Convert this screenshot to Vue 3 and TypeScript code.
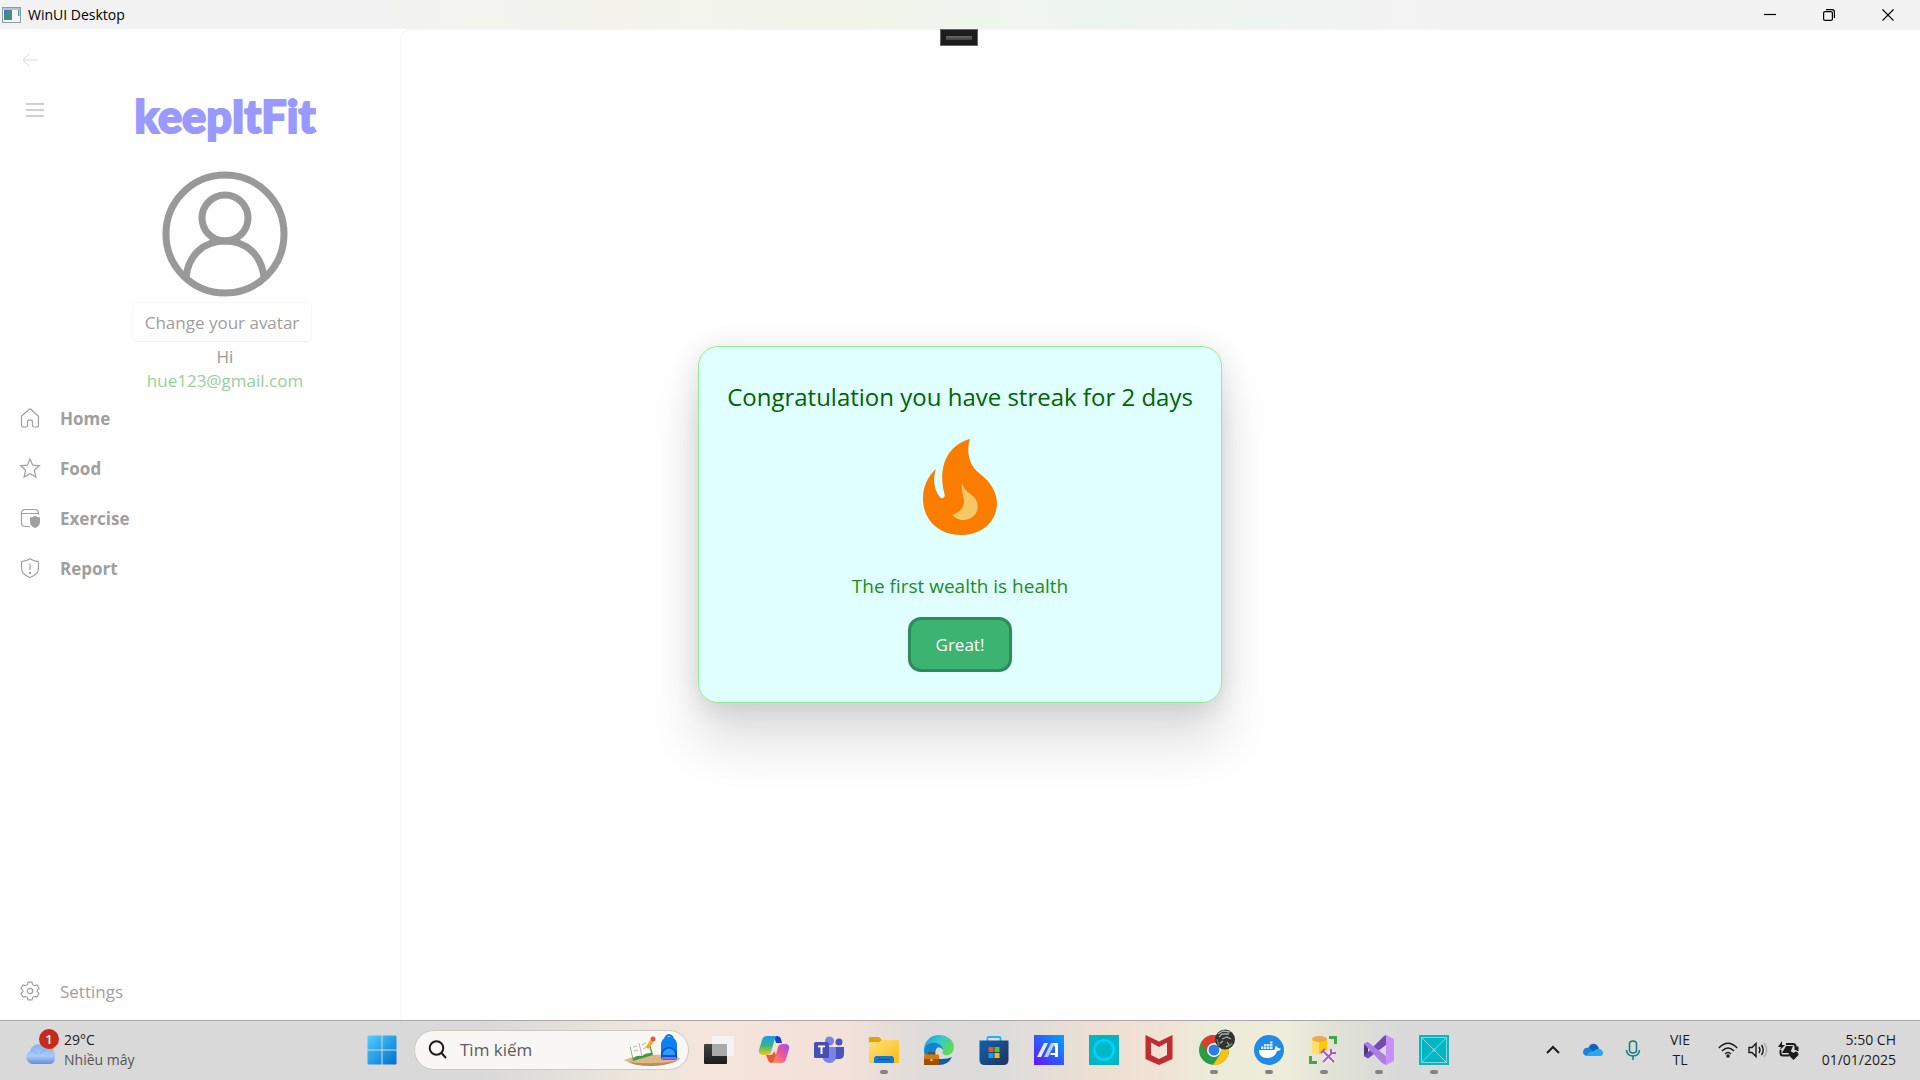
<script setup lang="ts">
interface NavItem {
  label: string
  outline: string
  solid?: string
}

const navItems: NavItem[] = [
  { label: 'Home', outline: 'M1.5 8.2 9.2 1.2Q10 .6 10.8 1.2L18.5 8.2V17Q18.5 19 16.5 19H14Q12.5 19 12.5 17.5V13.5Q12.5 12.2 11.2 12.2H8.8Q7.5 12.2 7.5 13.5V17.5Q7.5 19 6 19H3.500Q1.500 19 1.500 17Z' },
  { label: 'Food', outline: 'M10 1 12.700 7.200 19.400 7.800 14.400 12.300 15.900 19 10 15.700 4.100 19 5.600 12.300 .6 7.800 7.300 7.200Z' },
  { label: 'Exercise', outline: 'M10 18.500H5Q1.500 18.500 1.500 15V5Q1.500 1.500 5 1.500H15Q18.500 1.500 18.500 5V6.500M1.500 5.500H18.500', solid: 'M15 7.500Q17 9.300 20 9.500V14Q20 18 15 20Q10 18 10 14V9.500Q13 9.300 15 7.500Z' },
  { label: 'Report', outline: 'M10 .8Q14 3.500 18.500 3.700V10Q18.500 16.500 10 19.500Q1.500 16.500 1.500 10V3.700Q6 3.500 10 .8ZM10 5.500V12', solid: 'M9 14H11V16H9Z' },
]
</script>

<template>
  <div class="desktop">
    <header class="titlebar">
      <svg class="app-icon" viewBox="0 0 19 16" aria-hidden="true">
        <rect x=".5" y=".5" width="18" height="15" fill="#f4f6f8" stroke="#8e9aa5" />
        <path d="M1 1H18V3H1Z" fill="#b9c3cc" />
        <path d="M2 3H10V13H2Z" fill="#3f9080" />
        <path d="M2 3H7L2 9Z" fill="#3d7fb0" />
        <path d="M16 3H17.500V9H16Z" fill="#4aa39a" />
      </svg>
      <span class="title">WinUI Desktop</span>
      <div class="window-buttons">
        <button type="button" aria-label="Minimize">
          <svg viewBox="0 0 12 12"><path d="M0 5.500H12" /></svg>
        </button>
        <button type="button" aria-label="Restore">
          <svg viewBox="0 0 12 12"><rect x=".6" y="2.600" width="8.800" height="8.800" rx="1.500" /><path d="M3 .6H9Q11.400 .6 11.400 3V9" /></svg>
        </button>
        <button type="button" aria-label="Close">
          <svg viewBox="0 0 12 12"><path d="M.5 .5 11.500 11.500M11.500 .5 .5 11.500" /></svg>
        </button>
      </div>
    </header>

    <main class="workspace">
      <aside class="sidebar">
        <button type="button" class="back" aria-label="Back">
          <svg viewBox="0 0 16 14"><path d="M15.500 7H1M7.500 .5 1 7 7.500 13.500" /></svg>
        </button>
        <div class="profile-row">
          <button type="button" class="menu" aria-label="Menu">
            <svg viewBox="0 0 20 14"><path d="M1 1H19M1 7H19M1 13H19" /></svg>
          </button>
          <div class="profile">
            <span class="brand">keepItFit</span>
            <svg class="avatar" viewBox="0 0 126 126" role="img" aria-label="Avatar">
              <circle cx="63" cy="63" r="59" />
              <circle cx="63" cy="47" r="23" />
              <path d="M24 107C26 84 42 70 63 70S100 84 102 107" />
            </svg>
            <button type="button" class="change">Change your avatar</button>
            <span class="greeting">Hi</span>
            <span class="email">hue123@gmail.com</span>
          </div>
        </div>
        <nav class="nav">
          <a v-for="item in navItems" :key="item.label" href="#" class="nav-item">
            <svg viewBox="0 0 20 20" aria-hidden="true">
              <path :d="item.outline" class="outline" />
              <path v-if="item.solid" :d="item.solid" class="solid" />
            </svg>
            <span>{{ item.label }}</span>
          </a>
        </nav>
        <a href="#" class="nav-item settings">
          <svg viewBox="0 0 20 20" aria-hidden="true">
            <path class="outline" d="M8 1.200H12L12.700 3.700 14.500 4.700 17 4 19 7.500 17.200 9.300V10.700L19 12.500 17 16 14.500 15.300 12.700 16.300 12 18.800H8L7.300 16.300 5.500 15.300 3 16 1 12.500 2.800 10.700V9.300L1 7.500 3 4 5.500 4.700 7.300 3.700Z" />
            <circle class="outline" cx="10" cy="10" r="2.700" />
          </svg>
          <span>Settings</span>
        </a>
      </aside>
      <section class="content"></section>

      <div class="debug-handle"><span></span></div>

      <div class="overlay">
        <section class="dialog" role="dialog" aria-labelledby="dialog-title">
          <h1 id="dialog-title">Congratulation you have streak for 2 days</h1>
          <svg class="flame" viewBox="0 0 74 96" aria-hidden="true">
            <path fill="#fa7d00" d="M47 0C43 13 46 26 56 34C68 43 74 54 74 65C73 84 58 96 38 96C15 96 0 80 0 60C0 47 5 37 13 30C9 42 12 52 17 58C19 61 23 58 21.500 55C15 31 22 7 47 0Z" />
            <path fill="#f7c765" d="M39 43C40 50 45 53 50 57C60 67 53 81 40 81C36 81 32 79 29 76C36 74 41 69 41 62C40 55 38 51 39 43Z" />
          </svg>
          <p>The first wealth is health</p>
          <button type="button" class="confirm">Great!</button>
        </section>
      </div>
    </main>

    <footer class="taskbar">
      <button type="button" class="weather">
        <svg viewBox="0 0 34 36" aria-hidden="true">
          <defs>
            <linearGradient id="cloud" x1="0" y1="0" x2="0" y2="1"><stop offset="0" stop-color="#7fb2f4" /><stop offset=".6" stop-color="#adcaf6" /><stop offset="1" stop-color="#5f8be0" /></linearGradient>
          </defs>
          <circle cx="22" cy="17" r="7" fill="#f97b12" />
          <path fill="url(#cloud)" d="M7 35A7 7 0 0 1 5 22C7 14 18 13 21 20C27 18 31 23 30 29Q30 35 24 35Z" />
          <path fill="none" stroke="#86aff0" d="M5 22Q10 21 12 25M15 25Q17 21 22 20" />
          <circle cx="24" cy="10" r="10" fill="#c42b1c" />
          <text x="24" y="15" text-anchor="middle" fill="#fff" font-size="13" font-weight="600">1</text>
        </svg>
        <span class="stack"><span>29°C</span><span class="muted">Nhiều mây</span></span>
      </button>

      <div class="apps">
        <button type="button" class="app" aria-label="Start">
          <svg viewBox="0 0 30 30">
            <defs><linearGradient id="win" x1="0" y1="0" x2="1" y2="1"><stop offset="0" stop-color="#4fd0fd" /><stop offset="1" stop-color="#006fd0" /></linearGradient></defs>
            <path fill="url(#win)" d="M.5 1.500Q.5.500 1.500.500H14.500V14.500H.5ZM15.500.500H28.500Q29.500.500 29.500 1.500V14.500H15.500ZM.5 15.500H14.500V29.500H1.500Q.5 29.500.5 28.500ZM15.500 15.500H29.500V28.500Q29.500 29.500 28.500 29.500H15.500Z" />
          </svg>
        </button>
        <label class="search">
          <svg class="lens" viewBox="0 0 20 20" aria-hidden="true"><circle cx="8.500" cy="8" r="6.800" /><path d="M13.500 13 18 18" /></svg>
          <input type="text" placeholder="Tìm kiếm" aria-label="Tìm kiếm" />
          <svg class="doodle" viewBox="0 0 58 32" aria-hidden="true">
            <path fill="#dfb58a" d="M1 26Q20 18 54 22L57 25Q50 31 28 31Q8 31 1 26Z" />
            <path fill="#c18a58" d="M5 28Q28 31 54 27Q42 32 28 32Q12 32 5 28Z" />
            <path fill="#3e9b48" d="M7 13 10 27 30 21 27 10Z" />
            <path fill="#f8f8f5" d="M7 10Q12 7 16 9Q20 5 25 6L28 19Q22 19 19 22Q14 21 10 24Z" />
            <path fill="none" stroke="#b5b5b5" d="M16 9 19 22M10 13 14 12M11 17 15 16M19 11 23 9M20 15 24 13" />
            <path stroke="#f6a91f" stroke-width="3.500" d="M24 14 29 7" /><circle cx="30" cy="5" r="2.500" fill="#e4554a" />
            <path fill="none" stroke="#1573d6" stroke-width="2" d="M42 4Q46-2 50 4" />
            <path fill="#0b80f5" d="M38 11C38 0 54 0 54 11V24Q54 26 52 26H40Q38 26 38 24Z" />
            <path fill="#0456be" d="M38 19C40 11 52 11 54 19V24H38Z" /><path fill="#2e9bff" d="M40 19C42 13 50 13 52 19V21H40Z" />
            <path fill="#8d6cf3" d="M39 23H53V25H39Z" />
          </svg>
        </label>
        <button type="button" class="app" aria-label="Task view">
          <svg viewBox="0 0 30 30">
            <defs><linearGradient id="tv" x1="0" y1="0" x2="0" y2="1"><stop offset="0" stop-color="#454545" /><stop offset="1" stop-color="#1c1c1c" /></linearGradient></defs>
            <rect y="9" width="23" height="20" rx="1" fill="url(#tv)" /><rect x="8" y="1" width="22" height="20" rx="1" fill="#f4f4f4" /><path fill="#aaa" d="M8 9H23V21H8Z" />
          </svg>
        </button>
        <button type="button" class="app" aria-label="Copilot">
          <svg viewBox="0 0 30 30">
            <defs>
              <linearGradient id="cpa" x1="0" y1="0" x2="0" y2="1"><stop offset="0" stop-color="#189cf0" /><stop offset=".5" stop-color="#35b58a" /><stop offset="1" stop-color="#f3c80c" /></linearGradient>
              <linearGradient id="cpb" x1="1" y1="0" x2="0" y2="1"><stop offset="0" stop-color="#a64df0" /><stop offset=".5" stop-color="#ed5696" /><stop offset="1" stop-color="#ffa252" /></linearGradient>
            </defs>
            <path fill="#1645bc" d="M15 1H18Q21 1 22 4L23 8H17Z" />
            <path fill="url(#cpa)" d="M8 1H18Q16 2 15 7L12 17Q11 20 7 20H4Q-1 20 0 15L3 5Q4 1 8 1Z" />
            <path fill="url(#cpb)" d="M22 28H13Q15 27 16 23L19 12Q20 9 24 9H26Q31 9 30 14L27 24Q26 28 22 28Z" />
            <path fill="#ee5540" d="M7 20H11Q14 20 15 16L17 20 15 26Q14 28 12 28 10 28 9 25Z" />
          </svg>
        </button>
        <button type="button" class="app" aria-label="Teams">
          <svg viewBox="0 0 30 30">
            <circle cx="25" cy="7" r="3.500" fill="#4b53bc" /><circle cx="15.500" cy="6" r="4.500" fill="#7b83eb" />
            <path fill="#4b53bc" d="M20 12H30V19Q30 24 25 24H20Z" /><path fill="#7b83eb" d="M9 12H22V20Q22 28 15.500 28T8 20Z" />
            <rect y="7" width="15" height="16" rx="1.500" fill="#464eb8" /><path fill="#fff" d="M4 10.500H11V12.300H8.500V19H6.500V12.300H4Z" />
          </svg>
        </button>
        <button type="button" class="app running" aria-label="File Explorer">
          <svg viewBox="0 0 30 30">
            <defs><linearGradient id="folder" x1="0" y1="0" x2="1" y2="1"><stop offset="0" stop-color="#ffe07b" /><stop offset="1" stop-color="#f9bd15" /></linearGradient></defs>
            <path fill="#dda20e" d="M0 3Q0 2 1 2H10L13 5V10H0Z" /><path fill="url(#folder)" d="M0 7H10L13 5H29Q30 5 30 6V27Q30 28 29 28H1Q0 28 0 27Z" />
            <path fill="#1576cd" d="M5 28V24Q5 21 8 21H22Q25 21 25 24V28Z" /><path fill="#084f98" d="M9 24H21V25H9Z" />
          </svg>
        </button>
        <button type="button" class="app" aria-label="Edge">
          <svg viewBox="0 0 30 30">
            <defs><linearGradient id="edge" x1="0" y1="0" x2="1" y2=".5"><stop offset="0" stop-color="#1599e0" /><stop offset=".5" stop-color="#31c7d4" /><stop offset="1" stop-color="#60dc55" /></linearGradient></defs>
            <path fill="#0e5ca8" d="M9 14Q8 25 18 24Q24 24 28 22Q24 30 15 30Q5 29 2 20Z" />
            <path fill="url(#edge)" d="M0 15C0 6 7 0 15 0C24 0 30 6 30 12C30 18 25 21 21 20C17 19 19 17 19 15C19 9 9 7 0 15Z" />
            <path fill="#1183d2" d="M0 17C0 10 6 7 12 8Q19 10 19 15Q15 10 12 14Q10 20 14 27Q2 30 0 17Z" />
            <path fill="none" stroke="#794100" stroke-width="1.500" d="M5 20V18H10V20" /><rect y="19.500" width="15" height="10.500" rx="1" fill="#d6790c" /><path fill="#9e4e05" d="M0 24H15V30H0Z" /><circle cx="7.500" cy="25" r="1.300" fill="#ffca28" />
          </svg>
        </button>
        <button type="button" class="app" aria-label="Store">
          <svg viewBox="0 0 30 30">
            <defs><linearGradient id="store" x1="0" y1="0" x2="1" y2="1"><stop offset="0" stop-color="#0c61b0" /><stop offset="1" stop-color="#22335c" /></linearGradient></defs>
            <path fill="none" stroke="#22b4ef" stroke-width="1.800" d="M8.500 6V3Q8.500 2 9.500 2H20.500Q21.500 2 21.500 3V6" /><path fill="url(#store)" d="M.5 5.500H29.500V25Q29.500 30 24.500 30H5.500Q.5 30 .5 25Z" />
            <path fill="#f25022" d="M9.500 12H14.500V17H9.500Z" /><path fill="#7fba00" d="M15.500 12H20.500V17H15.500Z" /><path fill="#00a4ef" d="M9.500 18H14.500V23H9.500Z" /><path fill="#ffb900" d="M15.500 18H20.500V23H15.500Z" />
          </svg>
        </button>
        <button type="button" class="app" aria-label="MyASUS">
          <svg viewBox="0 0 30 30">
            <defs><linearGradient id="asus" x1="0" y1="1" x2="1" y2="0"><stop offset="0" stop-color="#6a12fb" /><stop offset=".5" stop-color="#2c5cff" /><stop offset="1" stop-color="#00a8ff" /></linearGradient></defs>
            <path fill="url(#asus)" d="M0 0H30V30H0Z" /><path fill="#e4ecff" d="M10 8H14L7 22H3Z" /><path fill="#b9d2ff" d="M17 8H21L14 22H10Z" /><path fill="#fff" d="M19 8H24V22H21V20H16L17 18H21V12Z" />
          </svg>
        </button>
        <button type="button" class="app" aria-label="Alexa">
          <svg viewBox="0 0 30 30"><path fill="#00b7c6" d="M0 0H30V30H0Z" /><circle cx="15" cy="15" r="9.700" fill="none" stroke="#00d2ff" stroke-width="2.500" /><path fill="#00d2ff" d="M12 23 17 26 20 22Z" /></svg>
        </button>
        <button type="button" class="app" aria-label="McAfee">
          <svg viewBox="0 0 30 30"><path fill="#bf2c31" fill-rule="evenodd" d="M1.500 0 15 6.500 28.500 0V24L15 30 1.500 24ZM7 7.500V20L15 24 23 20V7.500L15 12Z" /></svg>
        </button>
        <button type="button" class="app running" aria-label="Chrome">
          <svg viewBox="0 0 30 30">
            <circle cx="15" cy="15" r="15" fill="#2b9b47" /><path fill="#df3b2f" d="M2 7.500A15 15 0 0 1 28 7.500H15Q9 8 7.500 16Z" /><path fill="#fbc116" d="M15 7.500H28A15 15 0 0 1 14 30L22 18Q22 11 15 7.500Z" />
            <circle cx="15" cy="15" r="7" fill="#fff" /><circle cx="15" cy="15" r="5.500" fill="#2e7de9" />
            <circle cx="26" cy="4.500" r="10" fill="#303331" /><path fill="none" stroke="#a9afab" stroke-width="1.300" d="M19-1 24-4 31-3M20 2 23-1 30-1M23 4 28 2 32 4M21 8 24 6M28 7 30 10M27 12 33 9" /><path fill="none" stroke="#3d8a50" stroke-width="1.500" d="M18 4 20 11M33 8 30 12" /><path stroke="#b34444" d="M18 7 23 9" />
          </svg>
        </button>
        <button type="button" class="app running" aria-label="Docker">
          <svg viewBox="0 0 30 30"><circle cx="15" cy="15" r="15" fill="#208ce8" /><path fill="#fff" d="M5 15H20Q22 14 21 11Q23 11 24 13Q26 13 27 14Q26 16 23 16Q21 23 13 23Q5 23 5 15Z" /><path fill="#d6edff" d="M7 11.500H9.500V14H7ZM10 11.500H12.500V14H10ZM13 11.500H15.500V14H13ZM16 11.500H18.500V14H16ZM10 9H12.500V11H10ZM13 9H15.500V11H13ZM16 9H18.500V11H16ZM16 6.500H18.500V8.500H16Z" /></svg>
        </button>
        <button type="button" class="app running" aria-label="Database tools">
          <svg viewBox="0 0 30 30"><path fill="#ffe066" d="M3 4H18V17Q17 19 10.500 19T3 17Z" /><path fill="#ffcb00" d="M10 4H18V16Q16 19 10 19Z" /><ellipse cx="10.500" cy="4" rx="7.500" ry="3" fill="#f0a552" /><path fill="none" stroke="#43a64a" stroke-width="3" d="M20 2.500H26.500V9M1.500 21V27.500H8" /><path fill="none" stroke="#f7edf8" stroke-width="5" d="M14 16 25 27M24 16 14 27" /><path fill="none" stroke="#a75cc5" stroke-width="2" d="M12 18 16 14M14 16 25 27M14 27 23 18M22 14V18H27" /></svg>
        </button>
        <button type="button" class="app running" aria-label="Visual Studio">
          <svg viewBox="0 0 30 30"><path fill="#52328d" d="M0 9 4 7V23L0 21Z" /><path fill="#754bb2" d="M0 21 20 1 22 0V10L4 23.500Z" /><path fill="#ac7ee3" d="M0 9 4 7 22 21V30L18 28Z" /><path fill="#c68ffa" d="M22 0 30 4V26L22 30Z" /></svg>
        </button>
        <button type="button" class="app running" aria-label="WinUI Desktop">
          <svg viewBox="0 0 30 30"><path fill="#00b7c3" d="M0 0H30V30H0Z" /><path fill="none" stroke="#9fc9cb" d="M2.500 2.500H27.500V27.500H2.500ZM2.500 2.500 27.500 27.500M27.500 2.500 2.500 27.500" /><circle cx="15" cy="15" r="1.500" fill="#9fc9cb" /></svg>
        </button>
      </div>

      <div class="tray">
        <button type="button" class="tray-button" aria-label="Show hidden icons">
          <svg viewBox="0 0 20 20"><path class="line thick" d="M4 13 10 7 16 13" /></svg>
        </button>
        <button type="button" class="tray-button" aria-label="OneDrive">
          <svg viewBox="0 0 20 20"><path fill="#0a64bd" d="M5 9Q7 3 12 4Q15 5 16 9L11 13Z" /><path fill="#1485da" d="M4 16Q0 15 0 12Q1 7 6 8L14 14Z" /><path fill="#29a8ef" d="M3 16Q6 11 11 11Q14 8 17 9Q20 10 20 13T17 16Z" /></svg>
        </button>
        <button type="button" class="tray-button" aria-label="Microphone">
          <svg viewBox="0 0 20 20"><path fill="none" stroke="#0f7c80" stroke-width="1.500" d="M6.500 4Q6.500 1 10 1T13.500 4V10Q13.500 13 10 13T6.500 10ZM3.500 10Q4 16 10 16T16.500 10M10 16V20" /></svg>
        </button>
        <button type="button" class="stack language"><span>VIE</span><span>TL</span></button>
        <button type="button" class="status" aria-label="Network, sound and battery">
          <svg viewBox="0 0 20 20"><path class="line" d="M.8 8Q10-1.500 19.200 8M4 11Q10 5 16 11M7 14Q10 11 13 14" /><circle cx="10" cy="16" r="1.700" fill="#1b1b1b" /></svg>
          <svg viewBox="0 0 20 20"><path class="line" d="M1 7.500H4L8 3.500V16.500L4 12.500H1ZM11 7Q13 10 11 13M13.500 5Q17 10 13.500 15" /><path fill="none" stroke="#aaa" stroke-width="1.300" d="M16 3Q21.500 10 16 17" /></svg>
          <svg viewBox="0 0 20 20"><path class="line thick" d="M8 4H15Q17.500 4 17.500 6.500V10M2.500 10V13Q2.500 15.500 5 15.500H11M18 7.500H19.500V11" /><path fill="#1b1b1b" d="M4 1 0 7H3L2 10 7 5H4ZM8 6H15L12 13H4ZM15.500 20 10.500 15Q10.500 11.500 13.500 11.500L15.500 13 17.500 11.500Q20.500 11.500 20.500 15Z" /></svg>
        </button>
        <button type="button" class="stack clock"><span>5:50 CH</span><span>01/01/2025</span></button>
      </div>
    </footer>
  </div>
</template>

<style>
body {
  margin: 0;
}
</style>

<style scoped>
.desktop {
  display: flex;
  flex-direction: column;
  min-height: 100vh;
  background: #fefefe;
  font-family: "Open Sans", "Noto Sans", sans-serif;
  color: #1b1b1b;
}

button {
  margin: 0;
  padding: 0;
  border: 0;
  background: none;
  font: inherit;
  color: inherit;
}

a {
  color: inherit;
  text-decoration: none;
}

svg {
  display: block;
  overflow: visible;
}

.titlebar {
  box-sizing: border-box;
  display: flex;
  align-items: center;
  height: 29px;
  padding: 0 3px 0 2px;
  background: linear-gradient(90deg, #f2f2f2 20%, #f3f3eb 32%, #f1f4e9 46%, #f0f4ef 50%, #edf5f0 58%, #f2f2f2 75%);
}

.app-icon {
  width: 19px;
  height: 16px;
}

.title {
  margin-left: 7px;
  font-size: 14px;
  line-height: 20px;
  color: #000;
}

.window-buttons {
  display: flex;
  margin-left: auto;
}

.window-buttons button {
  display: flex;
  justify-content: center;
  width: 59px;
}

.window-buttons svg {
  width: 12px;
  height: 12px;
  fill: none;
  stroke: #000;
  stroke-width: 1.2;
}

.workspace {
  position: relative;
  display: flex;
  flex: 1;
}

.sidebar {
  box-sizing: border-box;
  display: flex;
  flex-direction: column;
  width: 400px;
  padding: 24px 0 4px;
  color: #9f9f9f;
  font-size: 17px;
}

.back {
  width: 16px;
  margin-left: 22px;
}

.back svg {
  height: 14px;
  fill: none;
  stroke: #dcdcdc;
}

.profile-row {
  display: flex;
  margin-top: 24px;
}

.menu {
  align-self: flex-start;
  width: 20px;
  margin: 12px 0 0 25px;
}

.menu svg {
  height: 14px;
  stroke: #a3a3a3;
}

.profile {
  display: flex;
  flex-direction: column;
  align-items: center;
  width: 180px;
  margin-left: 90px;
  line-height: 24px;
}

.brand {
  font-family: Lato, "Noto Sans", sans-serif;
  font-size: 45px;
  font-weight: 900;
  line-height: 50px;
  color: #9999ff;
  -webkit-text-stroke: 2px #9999ff;
}

.avatar {
  width: 126px;
  height: 126px;
  margin-top: 30px;
  fill: none;
  stroke: #999;
  stroke-width: 7;
}

.change {
  box-sizing: border-box;
  width: 180px;
  height: 40px;
  margin: 5px 6px 3px 0;
  padding-top: 2px;
  border: 1px solid #f7f7f7;
  border-bottom-color: #ededed;
  border-radius: 5px;
  white-space: nowrap;
}

.greeting {
  color: #999;
}

.email {
  color: #99cf99;
}

.nav-item {
  display: flex;
  align-items: center;
  gap: 20px;
  height: 50px;
  padding-left: 20px;
}

.nav-item svg {
  width: 20px;
  height: 20px;
}

.nav .nav-item {
  font-weight: 700;
}

.outline {
  fill: none;
  stroke: #a0a0a0;
  stroke-width: 1.2;
}

.solid {
  fill: #a0a0a0;
}

.settings {
  margin-top: auto;
}

.content {
  flex: 1;
  border: 1px solid #f7f7f7;
  border-width: 1px 0 0 1px;
  border-radius: 10px 0 0;
}

.debug-handle {
  position: absolute;
  top: 0;
  left: 50%;
  display: flex;
  align-items: center;
  box-sizing: border-box;
  width: 38px;
  height: 17px;
  margin-left: -20px;
  padding: 0 5px;
  border: 1px solid #666;
  background: #1d1d1d;
}

.debug-handle span {
  flex: 1;
  height: 4px;
  background: linear-gradient(#666, #404040);
}

.overlay {
  position: absolute;
  inset: 0;
  display: flex;
  align-items: center;
  justify-content: center;
}

.dialog {
  display: flex;
  flex-direction: column;
  align-items: center;
  padding: 30px 28px;
  border: 1px solid #90ee90;
  border-radius: 20px;
  background: #e0ffff;
  box-shadow: 0 40px 50px rgba(0, 0, 0, 0.12), 0 4px 28px rgba(0, 0, 0, 0.12);
}

.dialog h1 {
  margin: 0;
  font-size: 24px;
  font-weight: 400;
  line-height: 40px;
  color: #006400;
}

.flame {
  width: 74px;
  height: 96px;
  margin-top: 22px;
}

.dialog p {
  margin: 34px 0 14px;
  font-size: 19px;
  line-height: 34px;
  color: #228b22;
}

.confirm {
  width: 104px;
  height: 55px;
  border: 3px solid #2e8b57;
  border-radius: 13px;
  background: #3cb371;
  font-size: 17px;
  color: #fff;
}

.taskbar {
  box-sizing: border-box;
  display: flex;
  align-items: center;
  height: 60px;
  padding-bottom: 2px;
  border-top: 1px solid #aaa;
  background: linear-gradient(90deg, #d9d9d9 25%, #ece6dc 33%, #f5e4da 37%, #f3e1da 44%, #dedbd9 48%, #dcdcda 52%, #eedfd3 57%, #f0e1d4 60%, #ecebd8 63%, #ecedda 67%, #dfe0d6 70%, #d9d9d9 73%);
  font-size: 14px;
  line-height: 20px;
}

.weather {
  box-sizing: border-box;
  display: flex;
  align-items: center;
  width: 354px;
  padding-left: 25px;
  text-align: left;
}

.weather svg {
  width: 34px;
  height: 36px;
  margin-bottom: 6px;
}

.stack {
  display: flex;
  flex-direction: column;
}

.weather .stack {
  margin-left: 5px;
}

.muted {
  color: #555;
}

.apps {
  display: flex;
  align-items: center;
}

.app {
  position: relative;
  display: flex;
  justify-content: center;
  width: 55px;
}

.app svg {
  width: 30px;
  height: 30px;
}

.running::after {
  content: "";
  position: absolute;
  bottom: -9px;
  width: 8px;
  height: 4px;
  border-radius: 2px;
  background: #858381;
}

.search {
  box-sizing: border-box;
  display: flex;
  align-items: center;
  width: 275px;
  height: 40px;
  margin: 0 2px 0 5px;
  padding: 0 7px 0 13px;
  border: 1px solid #cdc9c5;
  border-radius: 20px;
  background: #f9f7f5;
}

.lens {
  width: 20px;
  height: 20px;
  fill: none;
  stroke: #1b1b1b;
  stroke-width: 2;
}

.search input {
  flex: 1;
  min-width: 0;
  margin-left: 12px;
  padding: 0;
  border: 0;
  outline: 0;
  background: none;
  font: inherit;
  font-size: 17px;
}

.search input::placeholder {
  color: #5c5c5c;
  opacity: 1;
}

.doodle {
  width: 58px;
  height: 32px;
}

.tray {
  display: flex;
  align-items: center;
  margin-left: auto;
  padding-right: 24px;
}

.tray-button {
  display: flex;
  justify-content: center;
  width: 40px;
}

.tray svg {
  width: 20px;
  height: 20px;
}

.line {
  fill: none;
  stroke: #1b1b1b;
  stroke-width: 1.4;
}

.thick {
  stroke-width: 2;
}

.language {
  align-items: center;
  width: 54px;
}

.status {
  display: flex;
  gap: 10px;
  margin-left: 11px;
}

.clock {
  align-items: flex-end;
  width: 98px;
}
</style>
